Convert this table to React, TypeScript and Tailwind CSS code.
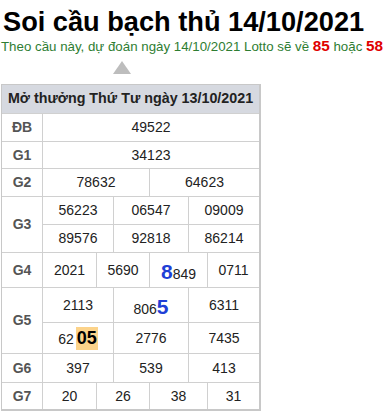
type Cell = { text: React.ReactNode; w?: string };

const line = "border-[#d0d0d0]";

function Values({ cells, h, top }: { cells: Cell[]; h: string; top?: boolean }) {
  return (
    <div className={`flex ${h} ${top ? `border-t ${line}` : ""}`}>
      {cells.map((c, i) => (
        <div
          key={i}
          className={`flex items-center justify-center border-l ${line} ${c.w ?? "flex-1"}`}
        >
          {c.text}
        </div>
      ))}
    </div>
  );
}

function Prize({ label, rows }: { label: string; rows: { h: string; cells: Cell[] }[] }) {
  return (
    <div className={`flex border-t ${line}`}>
      <div className="flex w-[40px] shrink-0 items-center justify-center text-[14px] font-bold text-[#555]">
        {label}
      </div>
      <div className="flex flex-1 flex-col">
        {rows.map((r, i) => (
          <Values key={i} cells={r.cells} h={r.h} top={i > 0} />
        ))}
      </div>
    </div>
  );
}

const big = "text-[21px] font-bold leading-none text-[#1f3fd6]";

export default function App() {
  return (
    <div className="min-h-[413px] w-[389px] bg-white font-['Liberation_Sans',Arial,sans-serif]">
      <h1 className="pt-[6px] pl-[3px] text-[27.2px] font-bold leading-[31px] text-black">
        Soi cầu bạch thủ 14/10/2021
      </h1>
      <p className="mt-px h-[16px] whitespace-nowrap pl-px text-[13.3px] leading-[16px] text-[#2e7d32]">
        Theo cầu này, dự đoán ngày 14/10/2021 Lotto sẽ về{" "}
        <b className="text-[15.3px] text-[#e00000]">85</b> hoặc{" "}
        <b className="text-[15.3px] text-[#e00000]">58</b>
      </p>
      <div className="ml-[113px] mt-[7px] h-0 w-0 border-x-[9px] border-b-[13px] border-x-transparent border-b-[#bdbdbd]" />

      <div className="ml-px mt-[10px] w-[260px] border-b-2 border-l border-r-2 border-t border-[#c8c8c8] text-[14px] text-[#222]">
        <div className="flex h-[28px] items-center justify-center bg-[#d6d9e0] text-[14.3px] font-bold text-[#222]">
          Mở thưởng Thứ Tư ngày 13/10/2021
        </div>

        <Prize label="ĐB" rows={[{ h: "h-[27px]", cells: [{ text: "49522" }] }]} />
        <Prize label="G1" rows={[{ h: "h-[26px]", cells: [{ text: "34123" }] }]} />
        <Prize
          label="G2"
          rows={[{ h: "h-[27px]", cells: [{ text: "78632", w: "w-[107px]" }, { text: "64623" }] }]}
        />
        <Prize
          label="G3"
          rows={[
            {
              h: "h-[27px]",
              cells: [
                { text: "56223", w: "w-[71px]" },
                { text: "06547", w: "w-[75px]" },
                { text: "09009" },
              ],
            },
            {
              h: "h-[28px]",
              cells: [
                { text: "89576", w: "w-[71px]" },
                { text: "92818", w: "w-[75px]" },
                { text: "86214" },
              ],
            },
          ]}
        />
        <Prize
          label="G4"
          rows={[
            {
              h: "h-[34px]",
              cells: [
                { text: "2021", w: "w-[54px]" },
                { text: "5690", w: "w-[53px]" },
                {
                  text: (
                    <span className="mt-[5px] flex items-baseline">
                      <span className={big}>8</span>849
                    </span>
                  ),
                  w: "w-[58px]",
                },
                { text: "0711" },
              ],
            },
          ]}
        />
        <Prize
          label="G5"
          rows={[
            {
              h: "h-[34px]",
              cells: [
                { text: "2113", w: "w-[71px]" },
                {
                  text: (
                    <span className="mt-[5px] flex items-baseline">
                      806<span className={big}>5</span>
                    </span>
                  ),
                  w: "w-[75px]",
                },
                { text: "6311" },
              ],
            },
            {
              h: "h-[31px]",
              cells: [
                {
                  text: (
                    <span className="flex items-baseline">
                      62
                      <span className="ml-[2px] bg-[#fcd38a] px-px text-[18px] font-bold leading-[23px] text-black">
                        05
                      </span>
                    </span>
                  ),
                  w: "w-[71px]",
                },
                { text: "2776", w: "w-[75px]" },
                { text: "7435" },
              ],
            },
          ]}
        />
        <Prize
          label="G6"
          rows={[
            {
              h: "h-[28px]",
              cells: [
                { text: "397", w: "w-[71px]" },
                { text: "539", w: "w-[75px]" },
                { text: "413" },
              ],
            },
          ]}
        />
        <Prize
          label="G7"
          rows={[
            {
              h: "h-[26px]",
              cells: [
                { text: "20", w: "w-[54px]" },
                { text: "26", w: "w-[53px]" },
                { text: "38", w: "w-[58px]" },
                { text: "31" },
              ],
            },
          ]}
        />
      </div>
    </div>
  );
}
